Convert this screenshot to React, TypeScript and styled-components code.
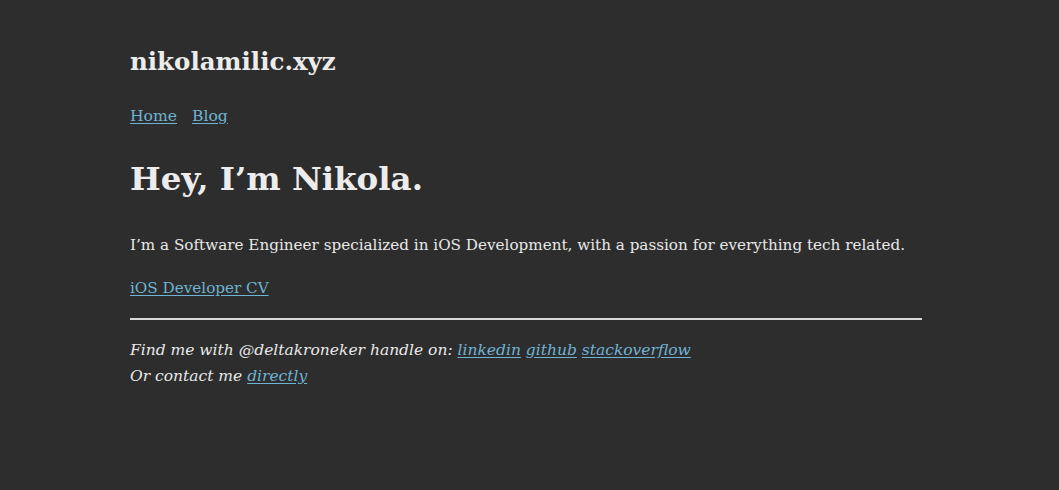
import React from "react";
import styled, { createGlobalStyle } from "styled-components";

const Global = createGlobalStyle`
  html, body { margin: 0; padding: 0; background: #2d2d2d; }
  body { font-family: "DejaVu Serif", Georgia, serif; color: #e8e8e8; }
`;

const Page = styled.div`
  width: 792px;
  margin: 0 0 0 130px;
  padding-top: 44px;
`;

const SiteTitle = styled.h1`
  margin: 0;
  font-size: 24.5px;
  font-weight: bold;
  line-height: 36px;
  color: #ececec;
`;

const Nav = styled.nav`
  display: flex;
  gap: 15px;
  margin-top: 25px;
`;

const Link = styled.a`
  color: #6fb3d2;
  text-decoration: underline;
  text-underline-offset: 2px;
`;

const NavLink = styled(Link)`
  font-size: 15.6px;
  line-height: 22px;
`;

const Heading = styled.h2`
  margin: 30px 0 0;
  font-size: 32.5px;
  line-height: 44px;
  font-weight: bold;
  color: #ececec;
`;

const Paragraph = styled.p<{ $gap: number }>`
  margin: ${(p) => p.$gap}px 0 0;
  font-size: 15.2px;
  line-height: 22px;
`;

const Rule = styled.hr`
  border: none;
  border-top: 2px solid #d8d8d8;
  margin: 19px 0 0;
`;

const Footer = styled.footer`
  margin-top: 17px;
  font-style: italic;
  font-size: 15.5px;
  line-height: 26px;
`;

export default function App() {
  return (
    <>
      <Global />
      <Page>
        <SiteTitle>nikolamilic.xyz</SiteTitle>
        <Nav>
          <NavLink href="#">Home</NavLink>
          <NavLink href="#">Blog</NavLink>
        </Nav>
        <Heading>Hey, I’m Nikola.</Heading>
        <Paragraph $gap={33}>
          I’m a Software Engineer specialized in iOS Development, with a passion for everything tech related.
        </Paragraph>
        <Paragraph $gap={21}>
          <Link href="#">iOS Developer CV</Link>
        </Paragraph>
        <Rule />
        <Footer>
          Find me with @deltakroneker handle on: <Link href="#">linkedin</Link> <Link href="#">github</Link>{" "}
          <Link href="#">stackoverflow</Link>
          <br />
          Or contact me <Link href="#">directly</Link>
        </Footer>
      </Page>
    </>
  );
}
